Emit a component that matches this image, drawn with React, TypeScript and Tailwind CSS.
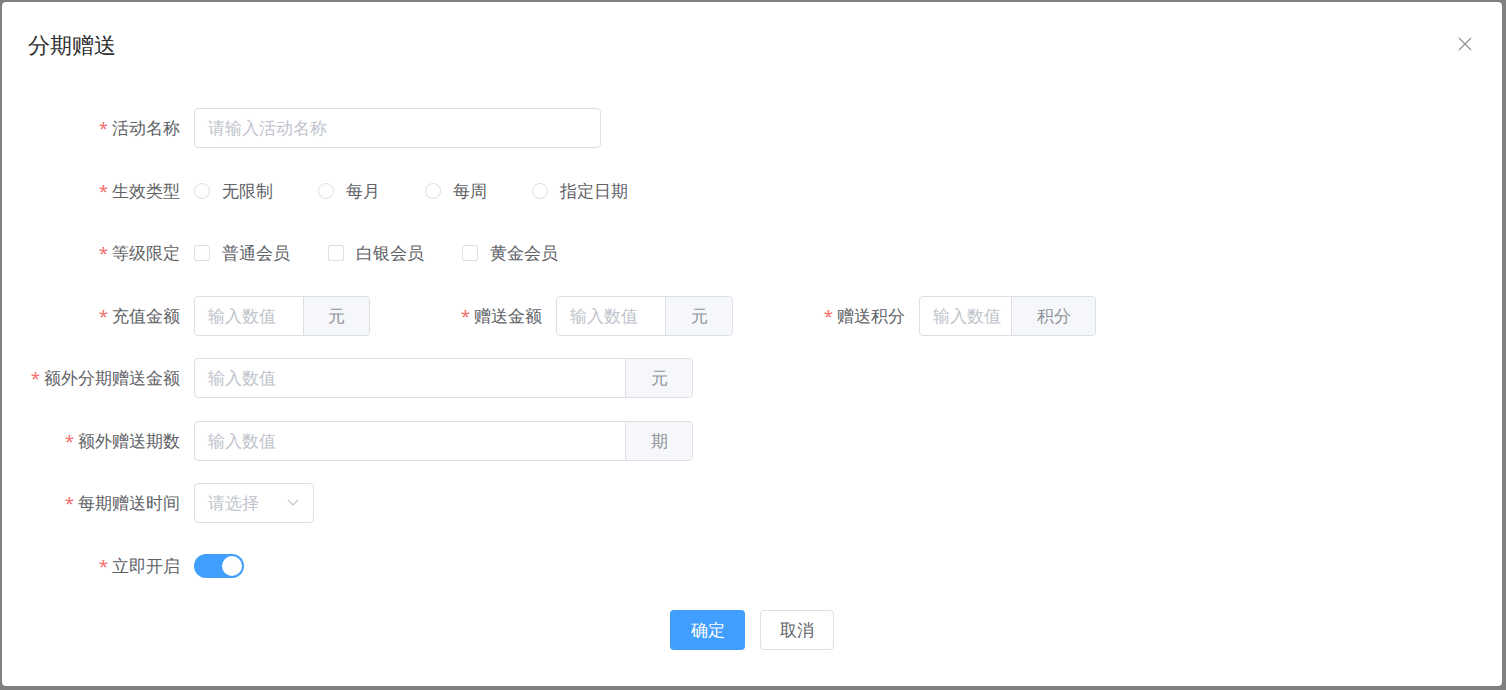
import React from "react";

const font = "font-['Liberation_Sans','Noto_Sans_CJK_SC',sans-serif]";

function Label({ text, w = "w-[192px]" }: { text: string; w?: string }) {
  return (
    <div className={`${w} shrink-0 pr-[14px] text-right text-[17px] text-[#606266]`}>
      <span className="mr-1 text-[#f56c6c]">*</span>
      {text}
    </div>
  );
}

function Row({ children }: { children: React.ReactNode }) {
  return <div className="flex h-10 items-center mb-[22.5px]">{children}</div>;
}

function AppendInput({ inputW, appendW, unit }: { inputW: string; appendW: string; unit: string }) {
  return (
    <div className="flex h-10 shrink-0 rounded border border-[#dcdfe6]">
      <div className={`${inputW} px-[13px] flex items-center text-[17px] text-[#c0c4cc] overflow-hidden whitespace-nowrap`}>
        输入数值
      </div>
      <div className={`${appendW} flex items-center justify-center border-l border-[#dcdfe6] bg-[#f5f7fa] text-[17px] text-[#909399] rounded-r`}>
        {unit}
      </div>
    </div>
  );
}

export default function App() {
  return (
    <div className={`${font} h-[690px] w-[1506px] bg-[#808080] p-[2px] pr-[4px] pb-[4px]`}>
      <div className="h-full w-full rounded-sm bg-white">
        <div className="flex items-center justify-between pl-[26px] pr-[30px] pt-[27px] pb-[49px]">
          <div className="text-[22px] text-[#303133] leading-[30px]">分期赠送</div>
          <svg width="14" height="14" viewBox="0 0 14 14">
            <path d="M1 1L13 13M13 1L1 13" stroke="#909399" strokeWidth="1.2" />
          </svg>
        </div>

        <Row>
          <Label text="活动名称" />
          <div className="flex h-10 w-[407px] items-center rounded border border-[#dcdfe6] px-[13px] text-[17px] text-[#c0c4cc]">
            请输入活动名称
          </div>
        </Row>

        <Row>
          <Label text="生效类型" />
          <div className="flex items-center text-[17px] text-[#606266]">
            {["无限制", "每月", "每周", "指定日期"].map((t) => (
              <div key={t} className="mr-[45px] flex items-center">
                <span className="mr-[12px] h-[16px] w-[16px] rounded-full border border-[#dcdfe6]" />
                {t}
              </div>
            ))}
          </div>
        </Row>

        <Row>
          <Label text="等级限定" />
          <div className="flex items-center text-[17px] text-[#606266]">
            {["普通会员", "白银会员", "黄金会员"].map((t) => (
              <div key={t} className="mr-[38px] flex items-center">
                <span className="mr-[12px] h-[16px] w-[16px] rounded-[2px] border border-[#dcdfe6]" />
                {t}
              </div>
            ))}
          </div>
        </Row>

        <Row>
          <Label text="充值金额" />
          <AppendInput inputW="w-[108px]" appendW="w-[66px]" unit="元" />
          <Label text="赠送金额" w="w-[186px]" />
          <AppendInput inputW="w-[108px]" appendW="w-[67px]" unit="元" />
          <Label text="赠送积分" w="w-[186px]" />
          <AppendInput inputW="w-[91px]" appendW="w-[84px]" unit="积分" />
        </Row>

        <Row>
          <Label text="额外分期赠送金额" />
          <AppendInput inputW="w-[430px]" appendW="w-[67px]" unit="元" />
        </Row>

        <Row>
          <Label text="额外赠送期数" />
          <AppendInput inputW="w-[430px]" appendW="w-[67px]" unit="期" />
        </Row>

        <Row>
          <Label text="每期赠送时间" />
          <div className="flex h-10 w-[120px] items-center justify-between rounded border border-[#dcdfe6] pl-[13px] pr-[14px] text-[17px] text-[#c0c4cc]">
            请选择
            <svg width="12" height="8" viewBox="0 0 12 8">
              <path d="M1 1L6 6L11 1" stroke="#c0c4cc" strokeWidth="1.2" fill="none" />
            </svg>
          </div>
        </Row>

        <Row>
          <Label text="立即开启" />
          <div className="flex h-[24px] w-[50px] items-center justify-end rounded-full bg-[#409eff] pr-[2px]">
            <span className="h-[20px] w-[20px] rounded-full bg-white" />
          </div>
        </Row>

        <div className="flex justify-center gap-[15px] pt-[2px]">
          <button className="h-10 w-[75px] rounded bg-[#409eff] text-[17px] text-white">确定</button>
          <button className="h-10 w-[74px] rounded border border-[#dcdfe6] bg-white text-[17px] text-[#606266]">取消</button>
        </div>
      </div>
    </div>
  );
}
